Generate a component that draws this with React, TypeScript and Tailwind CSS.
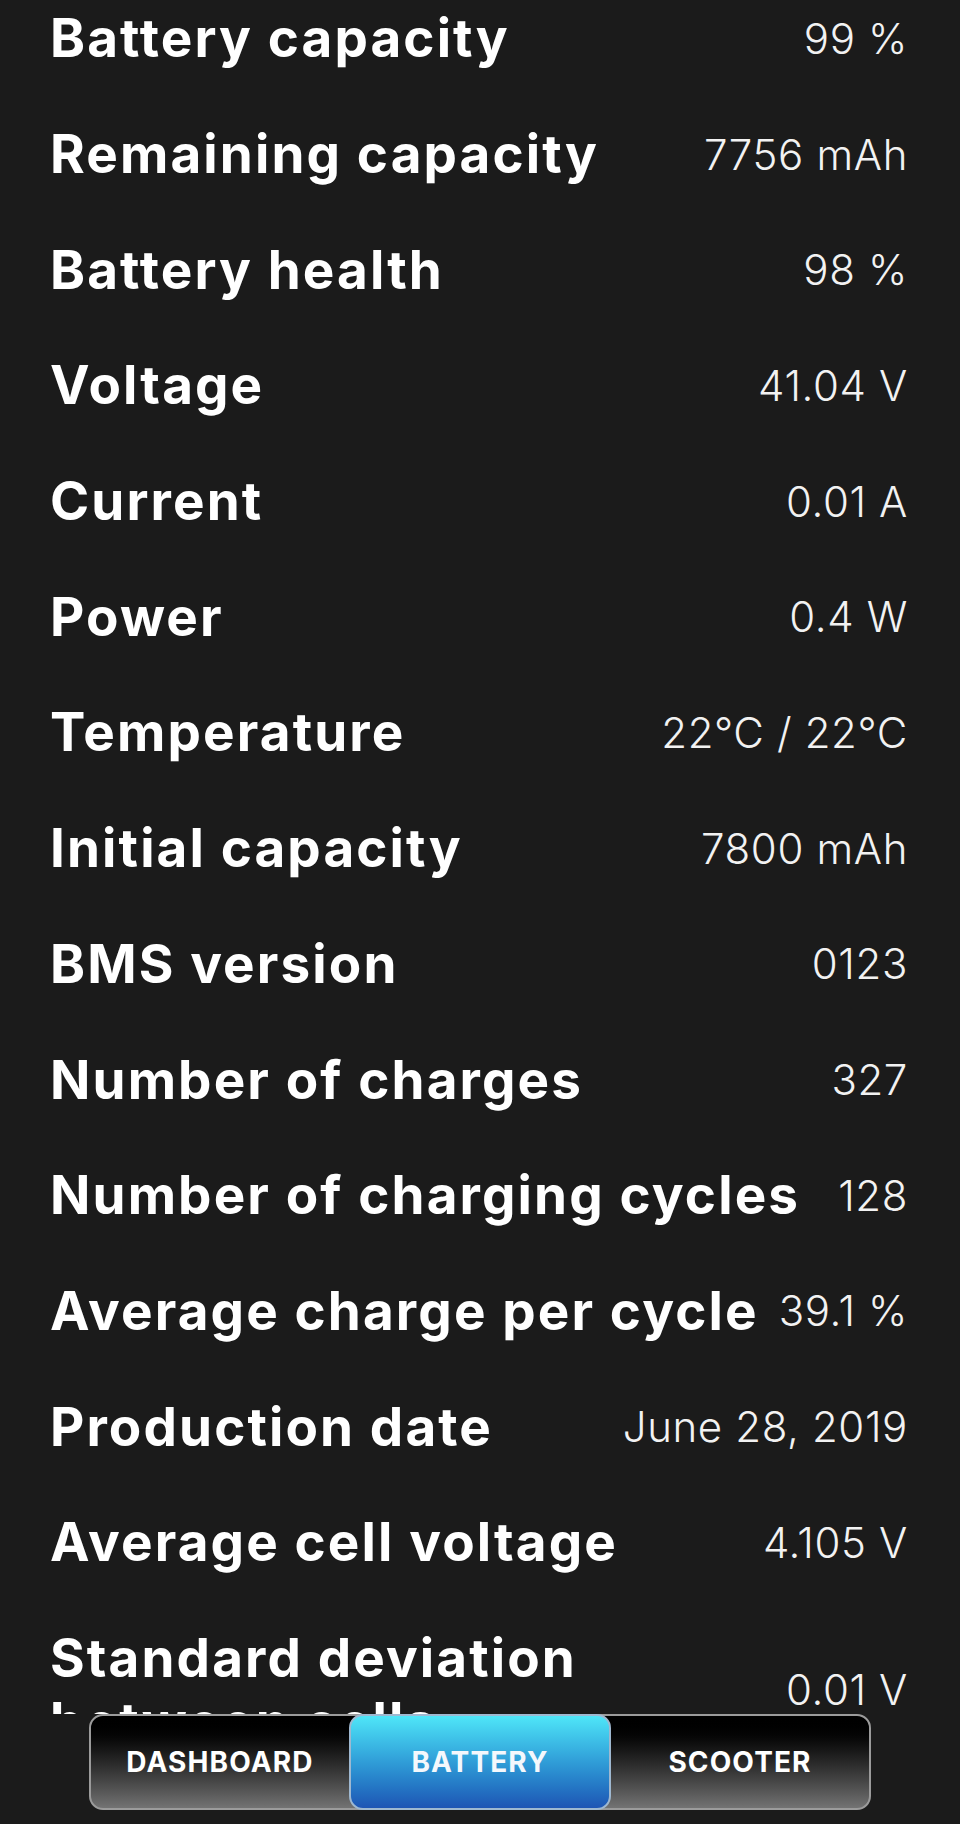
const rows: [string, string][] = [
  ["Battery capacity", "99 %"],
  ["Remaining capacity", "7756 mAh"],
  ["Battery health", "98 %"],
  ["Voltage", "41.04 V"],
  ["Current", "0.01 A"],
  ["Power", "0.4 W"],
  ["Temperature", "22°C / 22°C"],
  ["Initial capacity", "7800 mAh"],
  ["BMS version", "0123"],
  ["Number of charges", "327"],
  ["Number of charging cycles", "128"],
  ["Average charge per cycle", "39.1 %"],
  ["Production date", "June 28, 2019"],
  ["Average cell voltage", "4.105 V"],
  ["Standard deviation between cells", "0.01 V"],
]

const tabs = ["DASHBOARD", "BATTERY", "SCOOTER"]

export default function App() {
  return (
    <div className="relative h-[1824px] overflow-hidden bg-[#1b1b1b] font-['Inter',sans-serif] text-white">
      <div className="-mt-[19.5px] pl-[50px] pr-[52px]">
        {rows.map(([label, value]) => (
          <div key={label} className="flex items-center justify-between gap-3 py-[25.85px]">
            <div className="text-[53px] leading-[64px] font-bold tracking-[0.04em]">{label}</div>
            <div className="shrink-0 text-[42px] font-light tracking-[0.015em] text-[#f2f2f2]">{value}</div>
          </div>
        ))}
      </div>

      {/* bottom nav overlay */}
      <div className="absolute inset-x-0 bottom-0 h-[110px] bg-[#1b1b1b] px-[89px] pb-[14px]">
        <div className="flex h-[96px] rounded-[14px] border-2 border-[#9b9b9b] bg-gradient-to-b from-[#000000] to-[#737373]">
          {tabs.map((t) => (
            <div
              key={t}
              className={
                t === "BATTERY"
                  ? "-my-[2px] flex flex-1 items-center justify-center rounded-[14px] border-2 border-[#9fb8d0] bg-gradient-to-b from-[#4fe6f8] to-[#1f55b4] text-[28px] font-bold tracking-[0.04em] text-[#f4f8fc]"
                  : "flex flex-1 items-center justify-center text-[28px] font-bold tracking-[0.04em] text-white"
              }
            >
              {t}
            </div>
          ))}
        </div>
      </div>
    </div>
  )
}
